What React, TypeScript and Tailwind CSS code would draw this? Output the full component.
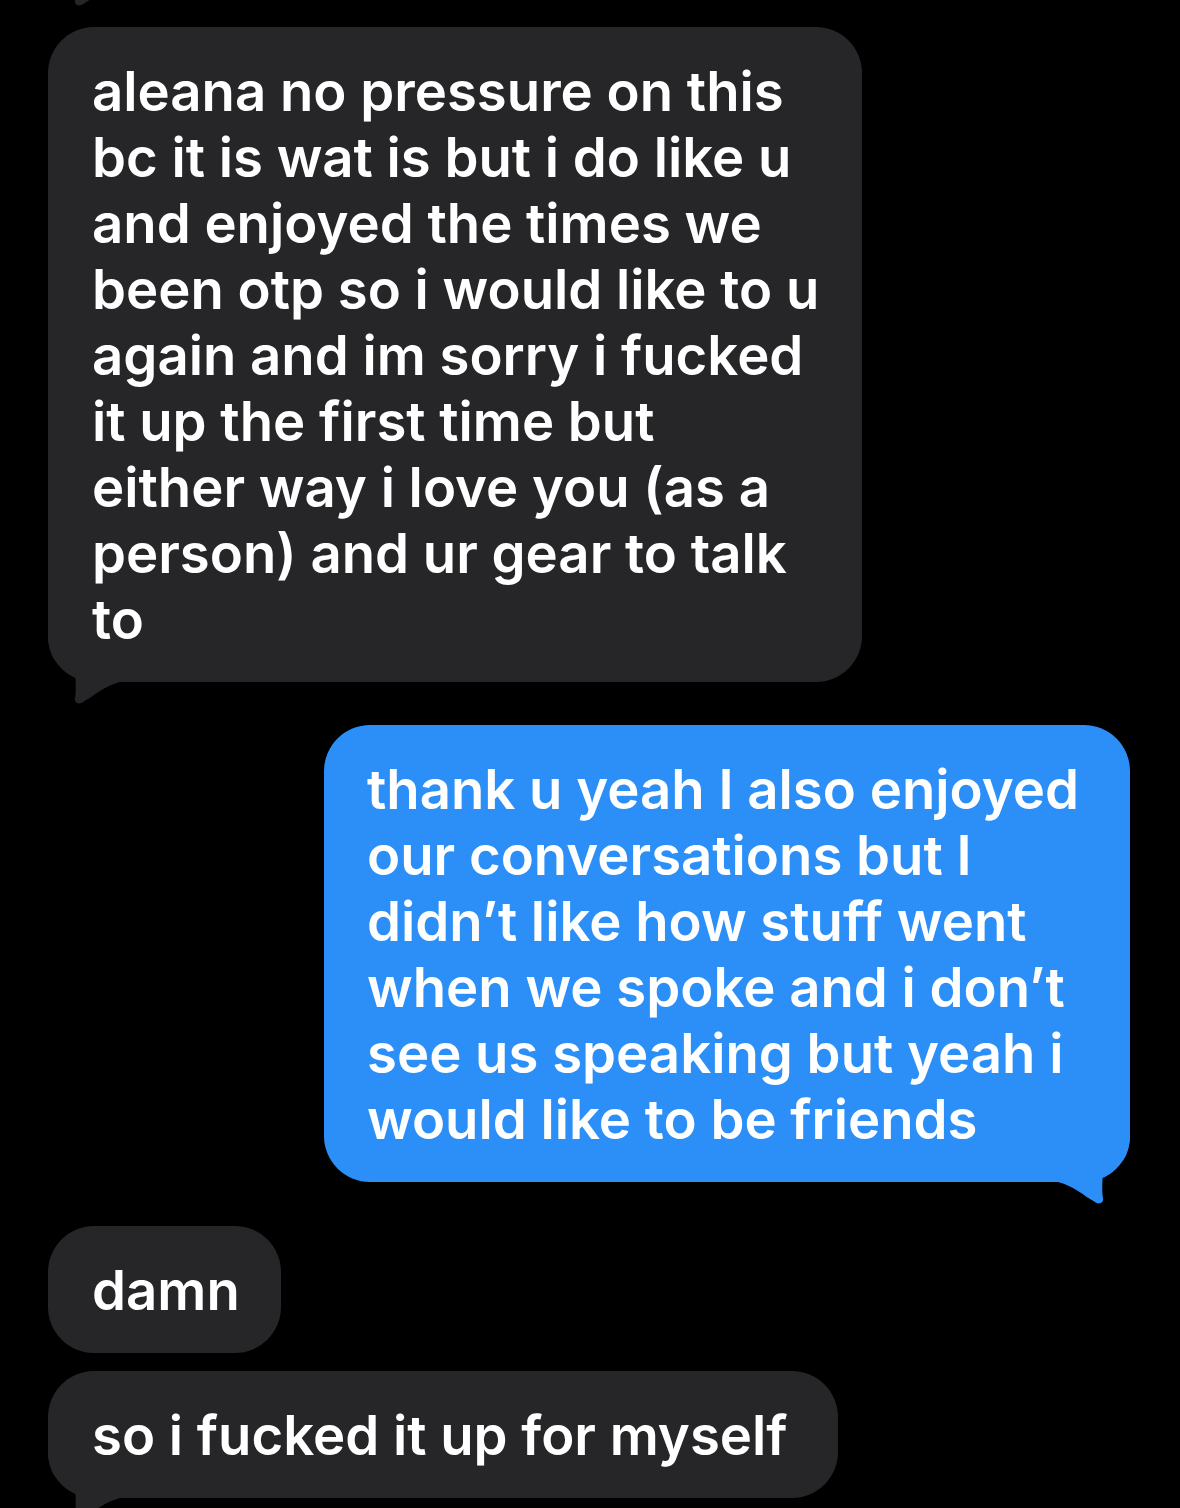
const first = [
  "aleana no pressure on this",
  "bc it is wat is but i do like u",
  "and enjoyed the times we",
  "been otp so i would like to u",
  "again and im sorry i fucked",
  "it up the first time but",
  "either way i love you (as a",
  "person) and ur gear to talk",
  "to",
];

const reply = [
  "thank u yeah I also enjoyed",
  "our conversations but I",
  "didn\u2019t like how stuff went",
  "when we spoke and i don\u2019t",
  "see us speaking but yeah i",
  "would like to be friends",
];

const TAIL = "M0 0 C0 24 8 36 27 40 C28 52 28 62 27 66 C26 71 31 73 35 70 C46 64 56 54 72 50 L72 0 Z";

function Tail({ color, side }: { color: string; side: "left" | "right" }) {
  return (
    <svg
      width="72"
      height="76"
      viewBox="0 0 72 76"
      className={
        side === "left"
          ? "absolute left-0 bottom-[-26px]"
          : "absolute right-0 bottom-[-26px] scale-x-[-1]"
      }
    >
      <path d={TAIL} fill={color} />
    </svg>
  );
}

function Bubble({
  lines,
  width,
  blue,
  tail,
}: {
  lines: string[];
  width: string;
  blue?: boolean;
  tail?: boolean;
}) {
  const color = blue ? "#2b8ff7" : "#262628";
  return (
    <div
      className={
        "relative rounded-[46px] py-[30.5px] " +
        width +
        (blue ? " bg-[#2b8ff7] self-end pl-[43px]" : " bg-[#262628] self-start pl-[44px]")
      }
    >
      {tail && <Tail color={color} side={blue ? "right" : "left"} />}
      <div className="relative">
        {lines.map((l, i) => (
          <div key={i} className="whitespace-nowrap leading-[66px]">
            {l}
          </div>
        ))}
      </div>
    </div>
  );
}

export default function App() {
  return (
    <div
      className="w-[1180px] h-[1508px] overflow-hidden bg-black text-white text-[54.5px] font-semibold"
      style={{ fontFamily: "Inter, 'Noto Sans', sans-serif" }}
    >
      <svg width="120" height="27" className="block ml-[48px]">
        <path d={TAIL} fill="#262628" transform="translate(0,-66)" />
      </svg>
      <div className="flex flex-col pl-[48px] pr-[50px]">
        <Bubble lines={first} width="w-[814px]" tail />
        <div className="h-[43px]" />
        <Bubble lines={reply} width="w-[806px]" blue tail />
        <div className="h-[44px]" />
        <Bubble lines={["damn"]} width="w-[233px]" />
        <div className="h-[18px]" />
        <Bubble lines={["so i fucked it up for myself"]} width="w-[790px]" tail />
      </div>
    </div>
  );
}
